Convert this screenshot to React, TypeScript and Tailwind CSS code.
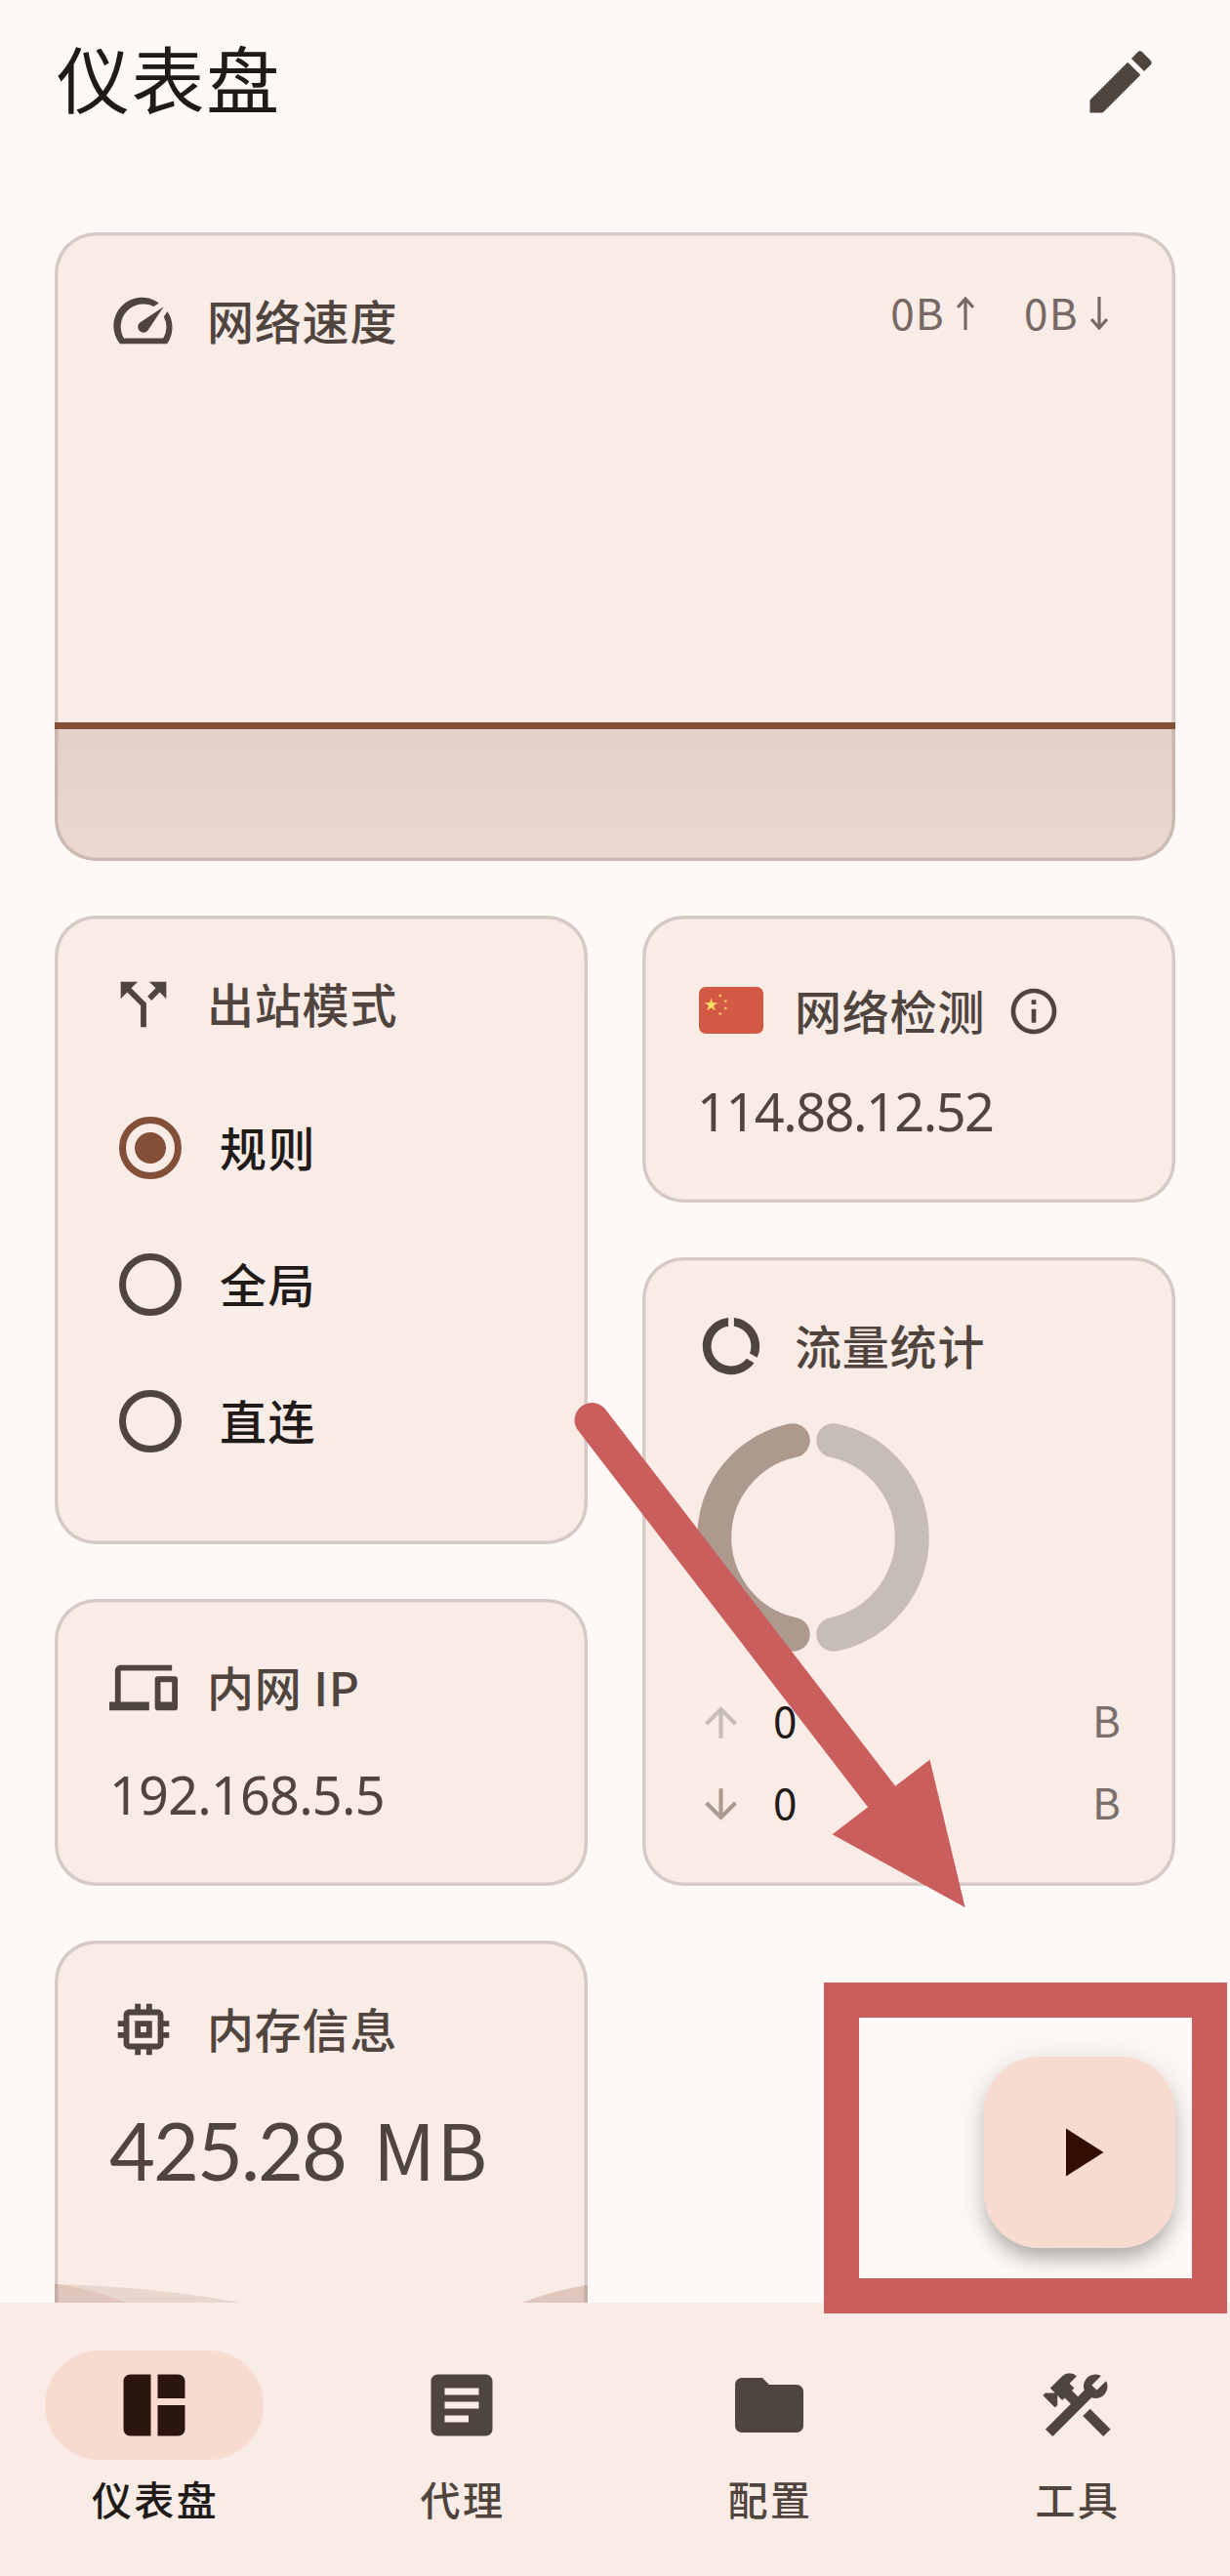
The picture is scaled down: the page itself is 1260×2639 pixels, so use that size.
import type { ReactNode } from "react";
import type { IconType } from "react-icons";
import {
  MdArrowDownward,
  MdArrowUpward,
  MdArticle,
  MdCallSplit,
  MdConstruction,
  MdDataUsage,
  MdDevices,
  MdEdit,
  MdFolder,
  MdInfoOutline,
  MdMemory,
  MdPlayArrow,
  MdSpaceDashboard,
} from "react-icons/md";

const SpeedIcon = () => (
  <svg viewBox="0 0 24 24" fill="currentColor" className="size-[70px] shrink-0">
    <path d="M20.38 8.57l-1.23 1.85a8 8 0 0 1-.22 7.58H5.07A8 8 0 0 1 15.58 6.85l1.85-1.23A10 10 0 0 0 3.75 20h16.5a10 10 0 0 0 .13-11.43z" />
    <path d="M10.59 15.41a2 2 0 0 0 2.83 0l5.66-8.49-8.49 5.66a2 2 0 0 0 0 2.83z" />
  </svg>
);

const STAR = "M0-1 .2245-.309.951-.309.363.118.588.809 0 .382-.588.809-.363.118-.951-.309-.2245-.309z";

const Flag = () => (
  <svg viewBox="0 0 66 48" className="-mt-[2px] ml-[2px] h-[48px] w-[66px] shrink-0">
    <rect width="66" height="48" rx="7" fill="#d25944" />
    <g fill="#fce063">
      <path d={STAR} transform="translate(12.5 18.5) scale(7)" />
      <path d={STAR} transform="translate(21.7 9) rotate(20) scale(2.1)" />
      <path d={STAR} transform="translate(27.3 14.6) rotate(45) scale(2.1)" />
      <path d={STAR} transform="translate(27.3 22) scale(2.1)" />
      <path d={STAR} transform="translate(21.7 27.4) rotate(20) scale(2.1)" />
    </g>
  </svg>
);

function Card({ className = "", children }: { className?: string; children: ReactNode }) {
  return (
    <section
      className={`relative overflow-hidden rounded-[42px] bg-[#f9ebe6] p-14 shadow-[inset_0_0_0_3.5px_#d6cac6] ${className}`}
    >
      {children}
    </section>
  );
}

function CardTitle({ icon, children }: { icon: ReactNode; children: ReactNode }) {
  return (
    <div className="flex h-[70px] items-center gap-[30px] text-[#50443f]">
      {icon}
      <h2 className="-mt-[4px] text-[48px] leading-[70px] font-medium tracking-[0.8px] whitespace-nowrap">{children}</h2>
    </div>
  );
}

function Radio({ label, checked = false }: { label: string; checked?: boolean }) {
  return (
    <div className="flex h-[140px] items-center gap-[39px] pl-[10px]">
      <span
        className={`flex size-[64px] items-center justify-center rounded-full border-[7px] ${
          checked ? "border-[#844f38]" : "border-[#50443f]"
        }`}
      >
        {checked && <span className="size-8 rounded-full bg-[#844f38]" />}
      </span>
      <span className="-mt-[4px] text-[48px] leading-[70px] font-medium tracking-[1.5px] text-[#201a18]">{label}</span>
    </div>
  );
}

function TrafficRow({ icon, value }: { icon: ReactNode; value: string }) {
  return (
    <div className="flex h-[84px] items-center text-[44px] leading-[84px]">
      {icon}
      <span className="-mt-[7px] ml-[29px] text-[#201a18]">{value}</span>
      <span className="-mt-[7px] ml-auto text-[#7a6f6b]">B</span>
    </div>
  );
}

function NavItem({ Icon, label, active = false }: { Icon: IconType; label: string; active?: boolean }) {
  return (
    <div className={`flex flex-1 flex-col items-center pt-[49px] ${active ? "text-[#201a18]" : "text-[#50443f]"}`}>
      <span
        className={`flex h-[112px] w-[224px] items-center justify-center rounded-full ${
          active ? "bg-[#f8dbd0] text-[#2a160e]" : ""
        }`}
      >
        <Icon className="size-[84px]" />
      </span>
      <span className="mt-[11px] pl-[3px] text-[41px] leading-[56px] font-medium tracking-[2.4px]">{label}</span>
    </div>
  );
}

export default function App() {
  return (
    <div className="relative flex h-[2639px] w-[1260px] flex-col overflow-hidden bg-[#fef9f6] font-['Noto_Sans_CJK_SC',sans-serif] text-[#201a18]">
      <header className="flex h-[168px] shrink-0 items-center justify-between pr-[70px] pl-[58px]">
        <h1 className="-mt-[10px] text-[75px] leading-[112px] tracking-[1.6px]">仪表盘</h1>
        <MdEdit className="size-[84px] text-[#50443f]" />
      </header>

      <main className="flex min-h-0 flex-1 flex-col gap-14 overflow-hidden px-14 pt-[70px]">
        <Card className="h-[644px] shrink-0">
          <div className="flex items-start justify-between">
            <CardTitle icon={<SpeedIcon />}>网络速度</CardTitle>
            <div className="flex gap-[51px] pr-[13px] text-[44px] leading-[56px] text-[#766864]">
              {["M9 34V2M1 11l8-9 8 9", "M9 0v32M1 23l8 9 8-9"].map((d) => (
                <span key={d} className="flex items-center gap-[12px]">
                  <span className="-mt-[3px] tracking-[1.3px]">0B</span>
                  <svg viewBox="0 0 18 34" className="h-[34px] w-[18px]" fill="none" stroke="currentColor" strokeWidth="3.2">
                    <path d={d} />
                  </svg>
                </span>
              ))}
            </div>
          </div>
          <div className="absolute inset-x-0 bottom-0 h-[142px] border-t-[7px] border-[#844f38] bg-linear-to-b from-[#844f38]/17 to-[#844f38]/12" />
        </Card>

        <div className="grid grid-cols-2 items-start gap-14">
          <div className="flex flex-col gap-14">
            <Card className="h-[644px]">
              <CardTitle icon={<MdCallSplit className="size-[70px]" />}>出站模式</CardTitle>
              <div className="mt-[42px]">
                <Radio label="规则" checked />
                <Radio label="全局" />
                <Radio label="直连" />
              </div>
            </Card>

            <Card className="h-[294px]">
              <CardTitle icon={<MdDevices className="size-[70px]" />}>内网 IP</CardTitle>
              <p className="mt-[36px] font-['Noto_Sans',sans-serif] text-[54px] leading-[76px] tracking-[-0.8px] text-[#50443f]">
                192.168.5.5
              </p>
            </Card>

            <Card className="h-[644px]">
              <CardTitle icon={<MdMemory className="size-[70px]" />}>内存信息</CardTitle>
              <p className="mt-[30px] flex items-baseline text-[#50443f]">
                <span className="font-['Lato',sans-serif] text-[81px] leading-[112px] tracking-[-2px]">425.28</span>
                <span className="ml-[28px] text-[79px] leading-[112px] tracking-[1px]">MB</span>
              </p>
              <svg viewBox="0 0 546 292" className="absolute inset-x-0 bottom-0 h-[292px] w-[546px]">
                <path d="M0 0C80 2 140 10 190 19L546 90V292H0z" fill="#e9d6cc" />
                <path d="M0 0C28 3 50 10 73 19L270 90L479 19C505 9 525 4 546 1V292H0z" fill="#e0c6bd" />
                <path d="M1.75 0V292M544.25 1V292" stroke="#c4ada5" strokeWidth="3.5" />
              </svg>
            </Card>
          </div>

          <div className="flex flex-col gap-14">
            <Card className="h-[294px]">
              <div className="flex h-[84px] items-center text-[#50443f]">
                <Flag />
                <h2 className="-mt-[4px] ml-[32px] text-[48px] leading-[70px] font-medium tracking-[0.8px] whitespace-nowrap">
                  网络检测
                </h2>
                <MdInfoOutline className="ml-[22px] size-14" />
              </div>
              <p className="mt-[22px] font-['Noto_Sans',sans-serif] text-[54px] leading-[76px] tracking-[-1.5px] text-[#50443f]">
                114.88.12.52
              </p>
            </Card>

            <Card className="h-[644px]">
              <CardTitle icon={<MdDataUsage className="size-[70px]" />}>流量统计</CardTitle>
              <svg viewBox="-119 -119 238 238" className="mt-[42px] size-[238px]" fill="none" strokeWidth="35" strokeLinecap="round">
                <path d="M-20.8-99.3A101.5 101.5 0 0 0-20.8 99.3" stroke="#ad998e" />
                <path d="M20.8-99.3A101.5 101.5 0 0 1 20.8 99.3" stroke="#c8bcb8" />
              </svg>
              <div className="mt-[28px]">
                <TrafficRow icon={<MdArrowUpward className="size-[49px] text-[#c8bcb8]" />} value="0" />
                <TrafficRow icon={<MdArrowDownward className="size-[49px] text-[#ad998e]" />} value="0" />
              </div>
            </Card>
          </div>
        </div>
      </main>

      <nav className="flex h-[280px] shrink-0 bg-[#f9ebe6]">
        <NavItem Icon={MdSpaceDashboard} label="仪表盘" active />
        <NavItem Icon={MdArticle} label="代理" />
        <NavItem Icon={MdFolder} label="配置" />
        <NavItem Icon={MdConstruction} label="工具" />
      </nav>

      <button className="absolute top-[2107px] right-14 flex size-[196px] items-center justify-center rounded-[56px] bg-[#f8dbd0] text-[#330d02] shadow-[0_14px_20px_-4px_rgba(0,0,0,0.26),0_4px_36px_rgba(0,0,0,0.12)]">
        <MdPlayArrow className="size-[84px]" />
      </button>
      <div className="absolute top-[2030.5px] left-[844px] h-[339px] w-[412.5px] border-[36px] border-[#ca5e5d]" />
      <svg
        viewBox="580 1430 420 530"
        className="absolute top-[1430px] left-[580px] h-[530px] w-[420px] text-[#ca5e5d]"
        fill="currentColor"
      >
        <path d="M606.3 1454.8L905 1843" stroke="currentColor" strokeWidth="35.5" strokeLinecap="round" />
        <path d="M988.6 1954L952.5 1802.7L852.6 1879.3z" />
      </svg>
    </div>
  );
}
